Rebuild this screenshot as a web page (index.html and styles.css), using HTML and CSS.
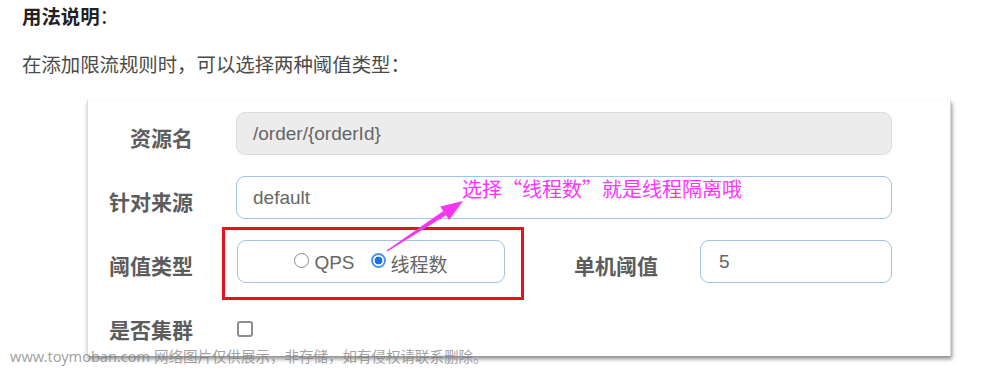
FILE: index.html
```html
<!DOCTYPE html>
<html lang="zh-CN">
<head>
<meta charset="utf-8">
<title>用法说明</title>
<link rel="stylesheet" href="styles.css">
</head>
<body>
<div class="doc">
  <p class="title"><strong>用法说明</strong>：</p>
  <p class="intro">在添加限流规则时，可以选择两种阈值类型：</p>
</div>
<div class="card">
  <div class="form">
    <div class="row">
      <span class="label">资源名</span>
      <span class="input disabled wide">/order/{orderId}</span>
    </div>
    <div class="row">
      <span class="label">针对来源</span>
      <span class="input wide">default</span>
    </div>
    <div class="row">
      <span class="label">阈值类型</span>
      <span class="input group">
        <span class="opt"><span class="radio"></span>QPS</span>
        <span class="opt"><span class="radio checked"></span>线程数</span>
      </span>
      <span class="label2">单机阈值</span>
      <span class="input small">5</span>
    </div>
    <div class="row last">
      <span class="label">是否集群</span>
      <span class="checkbox"></span>
    </div>
  </div>
  <div class="redbox"></div>
  <div class="note">选择“线程数”就是线程隔离哦</div>
  <svg class="arrow" width="864" height="256" viewBox="0 0 864 256">
    <polygon fill="#f535f2" points="298.6,150.4 355.3,111.1 358.1,115.3 299.4,151.6"/>
    <polygon fill="#f535f2" points="375,101 352.3,106.5 361.1,119.9"/>
  </svg>
</div>
<div class="watermark">www.toymoban.com 网络图片仅供展示，非存储，如有侵权请联系删除。</div>
</body>
</html>
```
FILE: styles.css
```css
html, body {
  margin: 0;
  padding: 0;
  background: #ffffff;
}
body {
  width: 1000px;
  height: 369px;
  overflow: hidden;
  position: relative;
  font-family: "Noto Sans CJK SC", "Noto Sans", sans-serif;
}
.doc {
  padding: 2px 22px 0;
}
.title {
  margin: 0;
  font-size: 19.4px;
  line-height: 28px;
  color: #333;
}
.title strong {
  font-weight: 700;
  color: #222;
}
.intro {
  margin: 20px 0 0;
  font-size: 19.4px;
  line-height: 28px;
  color: #4a4a4a;
}
.card {
  position: relative;
  margin: 22px 0 0 87px;
  width: 864px;
  height: 256px;
  box-sizing: border-box;
  border-left: 1px solid #dedede;
  border-right: 1px solid #d6d6d6;
  background: #fff;
  box-shadow: 1px 3px 4px rgba(0, 0, 0, 0.45);
  padding-top: 12px;
}
.form {
  display: flex;
  flex-direction: column;
  gap: 21px;
}
.row {
  display: flex;
  align-items: center;
  height: 43px;
}
.row.last {
  margin-top: 3px;
}
.label, .label2 {
  font-size: 21px;
  font-weight: 700;
  color: #5c5c5c;
  white-space: nowrap;
  margin-top: 6px;
}
.row.last .label {
  margin-top: 0;
}
.label {
  width: 105px;
  text-align: right;
  margin-right: 43px;
}
.label2 {
  margin-left: 69px;
  margin-right: 40px;
  width: 86px;
}
.input {
  box-sizing: border-box;
  height: 43px;
  border: 1.5px solid #a3c3e4;
  border-radius: 9px;
  display: flex;
  align-items: center;
  padding-left: 16px;
  font-family: "Liberation Sans", "Noto Sans CJK SC", sans-serif;
  font-size: 19px;
  color: #666;
}
.input.wide {
  width: 656px;
}
.input.disabled {
  background: #ececec;
  border-color: #dcdcdc;
}
.input.group {
  width: 268px;
  margin-left: 1px;
  padding-left: 0;
  justify-content: center;
  gap: 16px;
}
.input.small {
  width: 192px;
  padding-left: 18px;
}
.opt {
  display: flex;
  align-items: center;
  gap: 5px;
  margin-top: 3px;
}
.radio {
  box-sizing: border-box;
  width: 15px;
  height: 15px;
  border-radius: 50%;
  border: 1.5px solid #8a8a8a;
  background: #fff;
  margin-top: -6px;
}
.radio.checked {
  border: 2px solid #4a94f2;
  background: radial-gradient(circle, #1873f0 0 3.6px, #ffffff 4.2px);
}
.checkbox {
  box-sizing: border-box;
  width: 16px;
  height: 16px;
  border: 2px solid #8e8e8e;
  border-radius: 3px;
  margin-left: 1px;
}
.redbox {
  position: absolute;
  left: 134px;
  top: 127px;
  width: 302px;
  height: 73px;
  box-sizing: border-box;
  border: 3px solid #e8121f;
}
.note {
  position: absolute;
  left: 374px;
  top: 76px;
  font-size: 20px;
  line-height: 26px;
  color: #ff33ff;
  white-space: nowrap;
}
.arrow {
  position: absolute;
  left: 0;
  top: 0;
  pointer-events: none;
}
.watermark {
  position: absolute;
  left: 10px;
  top: 347px;
  font-family: "Noto Sans", "Noto Sans CJK SC", sans-serif;
  font-size: 14.5px;
  line-height: 18px;
  color: rgba(120, 120, 120, 0.7);
  white-space: nowrap;
}
```
